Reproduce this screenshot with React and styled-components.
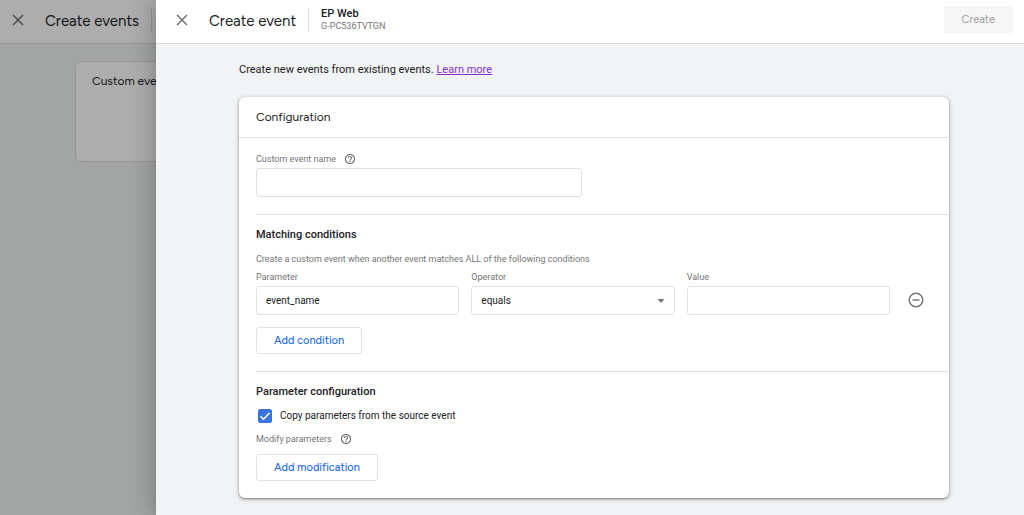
import React, { useState } from "react";
import styled, { createGlobalStyle } from "styled-components";

const GlobalStyle = createGlobalStyle`
  *, *::before, *::after { box-sizing: border-box; }
  body {
    margin: 0;
    background: #f1f3f4;
    color: #202124;
    font: 10px/16px Roboto, "Liberation Sans", sans-serif;
  }
  h1, h2, h3, p { margin: 0; font-weight: 400; }
  button, input, select { font: inherit; color: inherit; margin: 0; }
`;

const displayFont = `Figtree, Lato, "Open Sans", sans-serif`;

const Shell = styled.div`
  position: relative;
  min-height: 100vh;
  overflow: hidden;
`;

const UnderPage = styled.div`
  position: absolute;
  inset: 0;
`;

const Scrim = styled.div`
  position: absolute;
  inset: 0;
  background: rgba(0, 0, 0, 0.32);
`;

const Drawer = styled.div`
  position: relative;
  min-height: 100vh;
  margin-left: 156px;
  background: #f1f3f4;
  box-shadow: 0 8px 10px -5px rgba(0, 0, 0, 0.2), 0 0 24px 2px rgba(0, 0, 0, 0.24);
`;

const TopBar = styled.header`
  display: flex;
  align-items: center;
  height: 44px;
  padding: 0 11px 4px ${(p) => (p.$compact ? 10 : 18)}px;
  background: #fff;
  border-bottom: 1px solid #dadce0;
`;

const IconButton = styled.button`
  display: flex;
  align-items: center;
  justify-content: center;
  flex: none;
  width: 16px;
  height: 16px;
  padding: 0;
  border: 0;
  background: none;
  color: #757575;
`;

const PageTitle = styled.h1`
  margin-left: 19px;
  padding: 2px 12px 0 0;
  font: 400 15px/22px ${displayFont};
  white-space: nowrap;
`;

const Stream = styled.div`
  height: 24px;
  padding-left: 12px;
  border-left: 1px solid #dadce0;
  font-size: 9px;
  line-height: 12px;
  color: #757575;
  white-space: nowrap;
`;

const StreamName = styled.strong`
  display: block;
  font-size: 11px;
  font-weight: 500;
  color: #202124;
`;

const CreateButton = styled.button`
  height: 27px;
  margin-left: auto;
  padding: 0 18px;
  border: 0;
  border-radius: 2px;
  background: #f6f6f6;
  color: #9e9e9e;
  font: 400 11px/16px ${displayFont};
`;

const UnderCard = styled.section`
  height: 101px;
  margin: 17px 75px;
  padding: 10px 16px;
  border: 1px solid #dadce0;
  border-radius: 6px;
  background: #fff;
`;

const CardTitle = styled.h2`
  font: 400 12px/18px ${displayFont};
  white-space: nowrap;
`;

const Content = styled.main`
  padding: 18px 75px 16px 83px;
`;

const Intro = styled.p`
  font-size: 11px;
  line-height: 16px;
`;

const Link = styled.a`
  color: #8430ce;
  text-decoration: underline;
`;

const Card = styled.section`
  margin-top: 19px;
  border-radius: 6px;
  background: #fff;
  box-shadow: 0 1px 2px rgba(0, 0, 0, 0.35), 0 1px 5px rgba(0, 0, 0, 0.25);
`;

const CardHeader = styled.header`
  padding: 11px 17px;
  border-bottom: 1px solid #dfe1e5;
`;

const Section = styled.section`
  margin-left: 17px;
  padding: 12px 0 17px;

  & + & {
    border-top: 1px solid #dfe1e5;
  }
`;

const SectionTitle = styled.h3`
  font-size: 11px;
  font-weight: 500;
  line-height: 16px;
`;

const Hint = styled.p`
  margin-top: 9px;
  font-size: 9px;
  line-height: 14px;
  color: #757575;
`;

const LabelRow = styled.div`
  display: flex;
  align-items: center;
  gap: 8px;
  margin-top: ${(p) => p.$top || 0}px;
  font-size: 9px;
  line-height: 14px;
  color: #757575;
`;

const Field = styled.div`
  display: flex;
  flex-direction: column;
  gap: 2px;
  min-width: 0;
  max-width: ${(p) => (p.$single ? "326px" : "none")};
`;

const TextInput = styled.input`
  width: 100%;
  height: 29px;
  padding: 0 9px;
  border: 1px solid #dfe1e5;
  border-radius: 3px;
  background: #fff;
  outline: none;
  font-size: 10px;
`;

const SelectWrap = styled.div`
  display: grid;
  align-items: center;

  & > * { grid-area: 1 / 1; }

  & > svg {
    justify-self: end;
    margin-right: 10px;
    pointer-events: none;
  }
`;

const Select = styled(TextInput).attrs({ as: "select" })`
  appearance: none;
`;

const ConditionRow = styled.div`
  display: flex;
  align-items: flex-end;
  gap: 18px;
  margin-top: 4px;
  padding-right: 25px;

  & > ${IconButton} { margin-bottom: 7px; }
`;

const ConditionFields = styled.div`
  display: grid;
  grid-template-columns: repeat(3, 1fr);
  gap: 12px;
  flex: 1;
`;

const OutlineButton = styled.button`
  display: block;
  height: 27px;
  margin-top: ${(p) => p.$top}px;
  padding: 0 17px;
  border: 1px solid #dfe1e5;
  border-radius: 3px;
  background: #fff;
  color: #2a6fe6;
  font: 500 11px/16px ${displayFont};
`;

const CheckLabel = styled.label`
  display: flex;
  align-items: center;
  gap: 8px;
  margin-top: 8px;
  padding-left: 2px;
`;

const CheckBox = styled.span`
  display: grid;
  width: 14px;
  height: 14px;

  & > * { grid-area: 1 / 1; }
  & > svg { pointer-events: none; }
`;

const CheckInput = styled.input`
  appearance: none;
  width: 14px;
  height: 14px;
  border: 1px solid #757575;
  border-radius: 2px;

  &:checked {
    border-color: #3b73e0;
    background: #3b73e0;
  }
`;

const CloseIcon = () => (
  <svg width="12" height="12" viewBox="0 0 12 12" fill="none" stroke="currentColor" strokeWidth="1.5" aria-hidden="true">
    <path d="M1 1l10 10M11 1L1 11" />
  </svg>
);

const HelpIcon = () => (
  <svg width="12" height="12" viewBox="0 0 24 24" fill="#616161" aria-hidden="true">
    <path d="M11 18h2v-2h-2v2zm1-16C6.48 2 2 6.48 2 12s4.48 10 10 10 10-4.48 10-10S17.52 2 12 2zm0 18c-4.41 0-8-3.59-8-8s3.59-8 8-8 8 3.59 8 8-3.59 8-8 8zm0-14c-2.21 0-4 1.79-4 4h2c0-1.1.9-2 2-2s2 .9 2 2c0 2-3 1.75-3 5h2c0-2.25 3-2.5 3-5 0-2.21-1.79-4-4-4z" />
  </svg>
);

const RemoveIcon = () => (
  <svg width="16" height="16" viewBox="0 0 16 16" fill="none" stroke="#757575" strokeWidth="1.5" aria-hidden="true">
    <circle cx="8" cy="8" r="6.75" />
    <path d="M4.5 8h7" />
  </svg>
);

const CaretIcon = () => (
  <svg width="8" height="4" viewBox="0 0 8 4" fill="#757575" aria-hidden="true">
    <path d="M0.5 0h7L4 4z" />
  </svg>
);

const TickIcon = () => (
  <svg width="14" height="14" viewBox="0 0 14 14" fill="none" stroke="#fff" strokeWidth="1.5" aria-hidden="true">
    <path d="M2.5 7.3l3 3 6-6.3" />
  </svg>
);

export default function App() {
  const [copy, setCopy] = useState(true);
  return (
    <Shell>
      <GlobalStyle />
      <UnderPage aria-hidden="true">
        <TopBar $compact>
          <IconButton type="button" tabIndex={-1}><CloseIcon /></IconButton>
          <PageTitle as="div">Create events</PageTitle>
          <Stream />
        </TopBar>
        <UnderCard>
          <CardTitle>Custom events</CardTitle>
        </UnderCard>
      </UnderPage>
      <Scrim />
      <Drawer role="dialog" aria-labelledby="drawer-title">
        <TopBar>
          <IconButton type="button" aria-label="Close"><CloseIcon /></IconButton>
          <PageTitle id="drawer-title">Create event</PageTitle>
          <Stream>
            <StreamName>EP Web</StreamName>
            G-PC536TVTGN
          </Stream>
          <CreateButton type="button" disabled>Create</CreateButton>
        </TopBar>
        <Content>
          <Intro>
            Create new events from existing events. <Link href="#learn-more">Learn more</Link>
          </Intro>
          <Card>
            <CardHeader>
              <CardTitle>Configuration</CardTitle>
            </CardHeader>
            <Section>
              <Field $single>
                <LabelRow $top={2}>
                  <label htmlFor="event-name">Custom event name</label>
                  <HelpIcon />
                </LabelRow>
                <TextInput id="event-name" type="text" />
              </Field>
            </Section>
            <Section>
              <SectionTitle>Matching conditions</SectionTitle>
              <Hint>Create a custom event when another event matches ALL of the following conditions</Hint>
              <ConditionRow>
                <ConditionFields>
                  <Field>
                    <LabelRow as="label" htmlFor="parameter">Parameter</LabelRow>
                    <TextInput id="parameter" type="text" defaultValue="event_name" />
                  </Field>
                  <Field>
                    <LabelRow as="label" htmlFor="operator">Operator</LabelRow>
                    <SelectWrap>
                      <Select id="operator" defaultValue="equals">
                        <option value="equals">equals</option>
                      </Select>
                      <CaretIcon />
                    </SelectWrap>
                  </Field>
                  <Field>
                    <LabelRow as="label" htmlFor="value">Value</LabelRow>
                    <TextInput id="value" type="text" />
                  </Field>
                </ConditionFields>
                <IconButton type="button" aria-label="Remove condition"><RemoveIcon /></IconButton>
              </ConditionRow>
              <OutlineButton type="button" $top={12}>Add condition</OutlineButton>
            </Section>
            <Section>
              <SectionTitle>Parameter configuration</SectionTitle>
              <CheckLabel>
                <CheckBox>
                  <CheckInput type="checkbox" checked={copy} onChange={(e) => setCopy(e.target.checked)} />
                  {copy && <TickIcon />}
                </CheckBox>
                Copy parameters from the source event
              </CheckLabel>
              <LabelRow $top={8}>
                Modify parameters
                <HelpIcon />
              </LabelRow>
              <OutlineButton type="button" $top={8}>Add modification</OutlineButton>
            </Section>
          </Card>
        </Content>
      </Drawer>
    </Shell>
  );
}
